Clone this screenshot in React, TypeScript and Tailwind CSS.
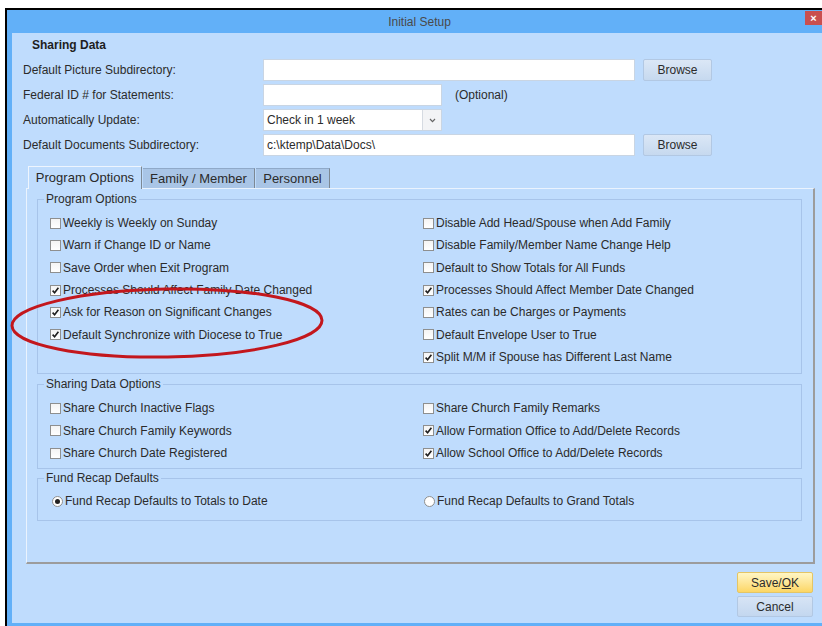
import React from "react";

type Opt = { label: string; checked?: boolean };

function CheckBox({ checked }: { checked?: boolean }) {
  return (
    <span className="w-[11px] h-[11px] shrink-0 border border-[#8e8f8f] bg-gradient-to-b from-[#f4f4f4] to-white flex items-center justify-center">
      {checked && (
        <svg width="9" height="9" viewBox="0 0 9 9">
          <path d="M1.6 4.6 L3.6 6.8 L7.4 1.8" fill="none" stroke="#1e1e1e" strokeWidth="1.6" />
        </svg>
      )}
    </span>
  );
}

function Radio({ checked }: { checked?: boolean }) {
  return (
    <span className="w-[11px] h-[11px] shrink-0 rounded-full border border-[#8e8f8f] bg-white flex items-center justify-center">
      {checked && <span className="w-[5px] h-[5px] rounded-full bg-[#222]" />}
    </span>
  );
}

function CheckRow({ label, checked }: Opt) {
  return (
    <div className="flex items-center h-[22.33px] pl-[2px]">
      <CheckBox checked={checked} />
      <span className="ml-[2px] whitespace-nowrap">{label}</span>
    </div>
  );
}

function Group({
  title,
  left,
  right,
  className,
}: {
  title: string;
  left: React.ReactNode;
  right: React.ReactNode;
  className: string;
}) {
  return (
    <fieldset className={"border border-[#a7c4ea] p-0 m-0 " + className}>
      <legend className="ml-[6px] px-[2px] text-[12px] leading-[14px] text-[#2b2b2b]">{title}</legend>
      {/* two option columns */}
      <div className="grid grid-cols-[373px_1fr] pl-[10px]">
        <div className="flex flex-col">{left}</div>
        <div className="flex flex-col">{right}</div>
      </div>
    </fieldset>
  );
}

const programLeft: Opt[] = [
  { label: "Weekly is Weekly on Sunday" },
  { label: "Warn if Change ID or Name" },
  { label: "Save Order when Exit Program" },
  { label: "Processes Should Affect Family Date Changed", checked: true },
  { label: "Ask for Reason on Significant Changes", checked: true },
  { label: "Default Synchronize with Diocese to True", checked: true },
];

const programRight: Opt[] = [
  { label: "Disable Add Head/Spouse when Add Family" },
  { label: "Disable Family/Member Name Change Help" },
  { label: "Default to Show Totals for All Funds" },
  { label: "Processes Should Affect Member Date Changed", checked: true },
  { label: "Rates can be Charges or Payments" },
  { label: "Default Envelope User to True" },
  { label: "Split M/M if Spouse has Different Last Name", checked: true },
];

const sharingLeft: Opt[] = [
  { label: "Share Church Inactive Flags" },
  { label: "Share Church Family Keywords" },
  { label: "Share Church Date Registered" },
];

const sharingRight: Opt[] = [
  { label: "Share Church Family Remarks" },
  { label: "Allow Formation Office to Add/Delete Records", checked: true },
  { label: "Allow School Office to Add/Delete Records", checked: true },
];

function BrowseButton() {
  return (
    <button className="ml-[8px] w-[69px] h-[22px] rounded-[2px] border border-[#b2c8e3] bg-gradient-to-b from-[#dbe7f6] to-[#c6d9ef] text-[12px] text-[#2b2b2b]">
      Browse
    </button>
  );
}

export default function App() {
  return (
    <div className="w-[822px] h-[626px] bg-white pt-[8px] pl-[5px] overflow-hidden relative font-['Liberation_Sans',Arial,sans-serif] text-[12px] text-[#2b2b2b]">
      <div className="h-full border-t-2 border-l-2 border-black bg-[#62b0f8] flex flex-col">
        {/* title bar */}
        <div className="h-[23px] shrink-0 relative flex items-center justify-center pl-[10px]">
          <span className="text-[12px] text-[#4a4a4a]">Initial Setup</span>
          <div className="absolute right-0 top-[1px] w-[17px] h-[14px] bg-[#c94f4f] flex items-center justify-center text-white text-[11px] leading-none font-bold">
            ×
          </div>
        </div>

        {/* client area */}
        <div className="flex-1 ml-[5px] mb-[3px] bg-[#bfdcfd] flex flex-col pt-[5px] pl-[11px]">
          <div className="pl-[9px] h-[14px] leading-[14px] font-bold text-[#1e1e1e]">Sharing Data</div>

          <div className="mt-[7px] flex flex-col gap-[3px]">
            <div className="flex items-center h-[22px]">
              <span className="w-[240px]">Default Picture Subdirectory:</span>
              <div className="w-[372px] h-[22px] bg-white border border-[#c9d5e3]" />
              <BrowseButton />
            </div>
            <div className="flex items-center h-[22px]">
              <span className="w-[240px]">Federal ID # for Statements:</span>
              <div className="w-[179px] h-[22px] bg-white border border-[#c9d5e3]" />
              <span className="ml-[13px]">(Optional)</span>
            </div>
            <div className="flex items-center h-[22px]">
              <span className="w-[240px]">Automatically Update:</span>
              <div className="w-[179px] h-[22px] bg-white border border-[#c9d5e3] flex items-center">
                <span className="flex-1 pl-[3px]">Check in 1 week</span>
                <span className="w-[19px] h-full border-l border-[#d6dbe2] bg-[#f3f4f6] flex items-center justify-center">
                  <svg width="7" height="5" viewBox="0 0 7 5">
                    <path d="M1 1 L3.5 3.6 L6 1" fill="none" stroke="#666" strokeWidth="1.2" />
                  </svg>
                </span>
              </div>
            </div>
            <div className="flex items-center h-[22px]">
              <span className="w-[240px]">Default Documents Subdirectory:</span>
              <div className="w-[372px] h-[22px] bg-white border border-[#c9d5e3] flex items-center pl-[3px]">
                c:\ktemp\Data\Docs\
              </div>
              <BrowseButton />
            </div>
          </div>

          {/* tabs */}
          <div className="mt-[10px] ml-[5px] h-[22px] flex items-end text-[13px]">
            <div className="relative z-10 mb-[-1px] w-[114px] h-[23px] bg-[#bfdcfd] border-t border-l border-[#eef5fe] border-r border-r-[#7d8893] flex items-center justify-center">
              Program Options
            </div>
            <div className="ml-[1px] w-[112px] h-[20px] bg-[#a9c5e6] border-t border-[#8fa9c8] border-r border-r-[#7d8893] flex items-center justify-center">
              Family / Member
            </div>
            <div className="ml-[1px] w-[74px] h-[20px] bg-[#a9c5e6] border-t border-[#8fa9c8] border-r border-r-[#7d8893] flex items-center justify-center">
              Personnel
            </div>
          </div>

          {/* tab page */}
          <div className="ml-[3px] w-[789px] h-[376px] border-t border-l border-[#eaf3fe] border-r-2 border-b-2 border-r-[#9c9c9c] border-b-[#9c9c9c] pt-[3px] pl-[10px] pr-[11px] flex flex-col">
            <Group
              title="Program Options"
              className="pt-[6px] pb-[5px]"
              left={programLeft.map((o) => (
                <CheckRow key={o.label} {...o} />
              ))}
              right={programRight.map((o) => (
                <CheckRow key={o.label} {...o} />
              ))}
            />
            <Group
              title="Sharing Data Options"
              className="mt-[3px] pt-[6px] pb-[4px]"
              left={sharingLeft.map((o) => (
                <CheckRow key={o.label} {...o} />
              ))}
              right={sharingRight.map((o) => (
                <CheckRow key={o.label} {...o} />
              ))}
            />
            <Group
              title="Fund Recap Defaults"
              className="mt-[2px] pt-[5px] pb-[8px]"
              left={
                <div className="flex items-center h-[22px] pl-[4px]">
                  <Radio checked />
                  <span className="ml-[2px]">Fund Recap Defaults to Totals to Date</span>
                </div>
              }
              right={
                <div className="flex items-center h-[22px] pl-[3px]">
                  <Radio />
                  <span className="ml-[2px]">Fund Recap Defaults to Grand Totals</span>
                </div>
              }
            />
          </div>

          {/* dialog buttons */}
          <div className="mt-[8px] self-end mr-[9px] flex flex-col gap-[3px]">
            <button className="w-[76px] h-[21px] rounded-[2px] border border-[#e4c565] bg-gradient-to-b from-[#fff6c4] to-[#fcd663] text-[12px] text-[#2b2b2b]">
              Save/<span className="underline">O</span>K
            </button>
            <button className="w-[76px] h-[21px] rounded-[2px] border border-[#b2c8e3] bg-gradient-to-b from-[#d7e4f5] to-[#c3d7ef] text-[12px] text-[#2b2b2b]">
              Cancel
            </button>
          </div>
        </div>
      </div>

      {/* red annotation ring drawn over the options */}
      <svg className="absolute left-0 top-0 pointer-events-none" width="822" height="626">
        <ellipse
          cx="167"
          cy="323"
          rx="155"
          ry="34"
          fill="none"
          stroke="#c3171d"
          strokeWidth="3"
          transform="rotate(-1 167 323)"
        />
      </svg>
    </div>
  );
}
